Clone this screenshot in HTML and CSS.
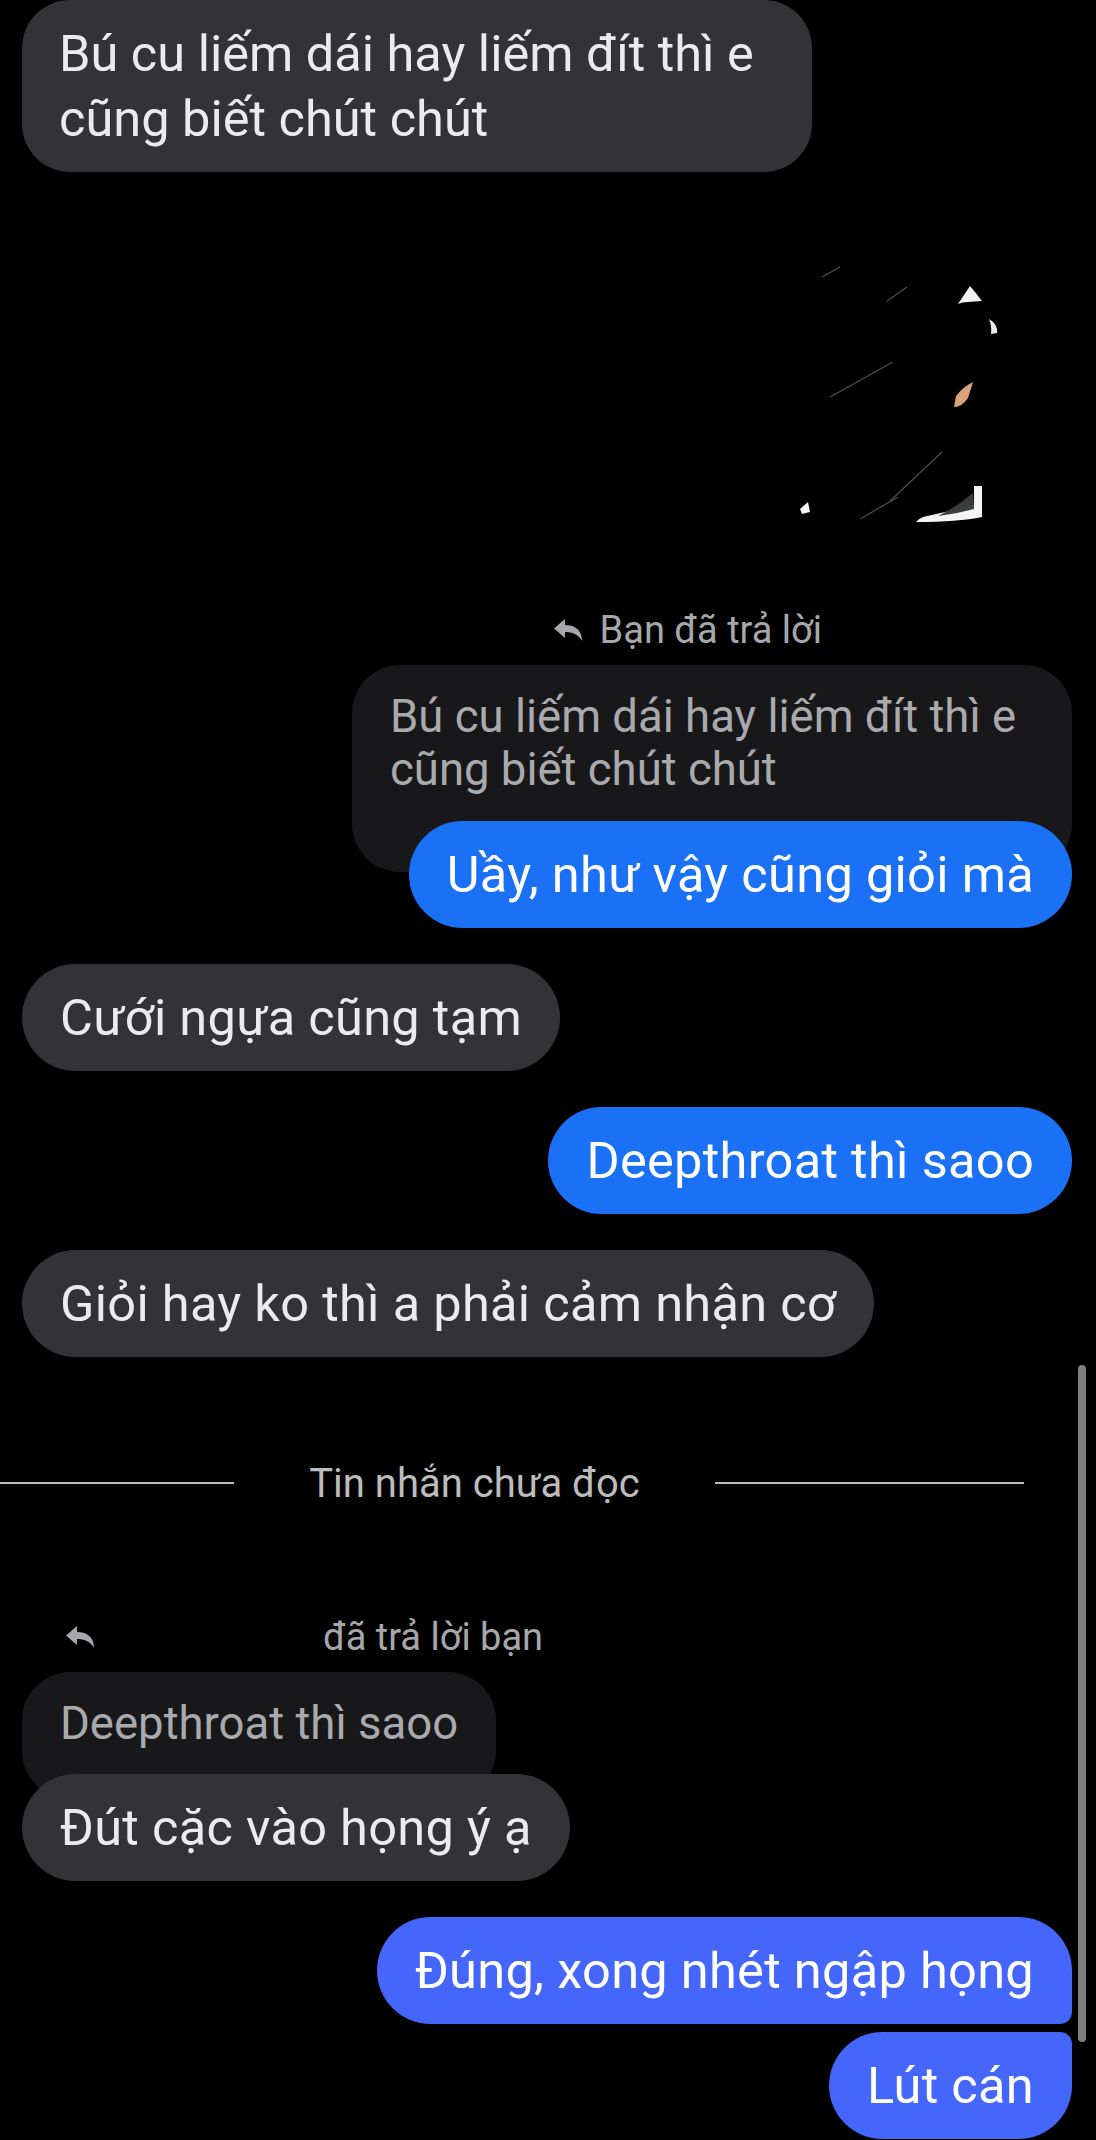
FILE: index.html
```html
<!DOCTYPE html>
<html lang="vi">
<head>
<meta charset="utf-8">
<link rel="stylesheet" href="styles.css">
</head>
<body>
<div class="chat">
  <div class="row in first">
    <div class="bubble gray two">Bú cu liếm dái hay liếm đít thì e cũng biết chút chút</div>
  </div>

  <div class="row out sticker-row">
    <svg class="sticker" width="200" height="260" viewBox="0 0 200 260">
      <g stroke="#6a6a6a" stroke-width="1.2" fill="none" opacity="0.75">
        <line x1="24" y1="12" x2="42" y2="2"/>
        <line x1="89" y1="36" x2="109" y2="22"/>
        <line x1="32" y1="132" x2="95" y2="97"/>
        <line x1="62" y1="254" x2="100" y2="232"/>
        <line x1="92" y1="236" x2="144" y2="187"/>
      </g>
      <path d="M172 21 Q178 28 184 36 L170 37 Q164 37 160 39 Q166 30 172 21 Z" fill="#f2f2f2"/>
      <path d="M191 54 Q200 59 199 68 L193 69 Q194 61 191 54 Z" fill="#ececec"/>
      <path d="M175 117 L170 133 Q164 142 156 142 L158 131 Q166 121 175 117 Z" fill="#d9a27a"/>
      <path d="M176 221 L184 221 L184 252 Q160 257 118 257 Q120 254 125 252 Q152 246 176 240 Z" fill="#f4f4f4"/>
      <path d="M175 228 L176 244 Q158 249 140 251 Q160 241 175 228 Z" fill="#3a3d3c"/>
      <path d="M2 244 L10 237 L12 247 L4 249 Z" fill="#f4f4f4"/>
    </svg>
  </div>

  <div class="row out label-row">
    <div class="reply-label">
      <svg class="reply-ico" width="31" height="24" viewBox="0 0 31 24"><path d="M12 1 L1 10.5 L12 20 L12 14 C19 14 25 16 29 23 C29 13 23 7 12 7 Z" fill="#a7a7ab"/></svg>
      <span>Bạn đã trả lời</span><span class="hidden-name"></span>
    </div>
  </div>
  <div class="row out quote-row">
    <div class="quote two">Bú cu liếm dái hay liếm đít thì e cũng biết chút chút</div>
  </div>
  <div class="row out overlap2">
    <div class="bubble blue">Uầy, như vậy cũng giỏi mà</div>
  </div>

  <div class="row in gap">
    <div class="bubble gray">Cưới ngựa cũng tạm</div>
  </div>
  <div class="row out gap">
    <div class="bubble blue">Deepthroat thì saoo</div>
  </div>
  <div class="row in gap">
    <div class="bubble gray">Giỏi hay ko thì a phải cảm nhận cơ</div>
  </div>

  <div class="divider">
    <span class="line left"></span>
    <span class="divider-text">Tin nhắn chưa đọc</span>
    <span class="line right"></span>
  </div>

  <div class="row in label-row2">
    <div class="reply-label">
      <svg class="reply-ico two" width="31" height="24" viewBox="0 0 31 24"><path d="M12 1 L1 10.5 L12 20 L12 14 C19 14 25 16 29 23 C29 13 23 7 12 7 Z" fill="#a7a7ab"/></svg>
      <span class="hidden-name2"></span><span>đã trả lời bạn</span>
    </div>
  </div>
  <div class="row in quote-row">
    <div class="quote">Deepthroat thì saoo</div>
  </div>
  <div class="row in overlap1">
    <div class="bubble gray">Đút cặc vào họng ý ạ</div>
  </div>

  <div class="row out gap">
    <div class="bubble violet top">Đúng, xong nhét ngập họng</div>
  </div>
  <div class="row out small-gap">
    <div class="bubble violet bottom">Lút cán</div>
  </div>
</div>
<div class="scrollbar"></div>
</body>
</html>
```

FILE: styles.css
```css
html, body {
  margin: 0;
  padding: 0;
  background: #000;
}
body {
  width: 1096px;
  height: 2140px;
  overflow: hidden;
  position: relative;
  font-family: "Roboto", "Noto Sans", sans-serif;
}
.chat {
  display: flex;
  flex-direction: column;
  padding: 0 24px 0 22px;
}
.row {
  display: flex;
}
.row.in { justify-content: flex-start; }
.row.out { justify-content: flex-end; }
.row.gap { margin-top: 36px; }
.row.small-gap { margin-top: 8px; }
.row.first { margin-top: 0; }

.bubble {
  box-sizing: border-box;
  font-size: 50.5px;
  line-height: 65px;
  letter-spacing: 0.3px;
  padding: 21px 38px;
  border-radius: 54px;
  color: #ebebef;
  max-width: 920px;
  position: relative;
}
.bubble.two { border-radius: 48px; padding-right: 20px; padding-left: 37px; max-width: 790px; letter-spacing: 0; }
.bubble.gray { background: #333336; }
.bubble.blue { background: #1a71f6; color: #fff; }
.bubble.violet { background: #4466fb; color: #fff; }
.bubble.top { border-bottom-right-radius: 12px; }
.bubble.bottom { border-top-right-radius: 12px; }

.sticker-row {
  height: 438px;
  padding-right: 74px;
  align-items: flex-start;
}
.sticker { margin-top: 93px; display: block; }

.reply-label {
  display: flex;
  align-items: center;
  font-size: 38px;
  line-height: 40px;
  color: #a7a7ab;
}
.reply-ico { margin-right: 16px; }
.reply-ico.two { margin-right: 17px; }
.label-row { padding-right: 35px; }
.hidden-name { display: inline-block; width: 215px; }
.hidden-name2 { display: inline-block; width: 210px; }
.label-row2 { margin-top: 114px; padding-left: 43px; }

.quote-row { margin-top: 15px; }
.quote {
  box-sizing: border-box;
  background: #18181a;
  color: #a9a9ae;
  font-size: 45.5px;
  line-height: 53px;
  padding: 25px 38px 49px;
  border-radius: 48px;
  max-width: 720px;
}
.quote.two { padding-right: 36px; padding-bottom: 76px; }
.overlap2 { margin-top: -51px; }
.overlap1 { margin-top: -25px; }

.divider {
  display: flex;
  align-items: center;
  margin-left: -22px;
  margin-top: 106px;
  height: 40px;
}
.divider .line {
  height: 2px;
  background: #bdbdbd;
}
.divider .left { width: 234px; }
.divider .right { width: 309px; }
.divider-text {
  font-size: 40px;
  color: #bcbcbf;
  width: 481px;
  text-align: center;
}

.scrollbar {
  position: absolute;
  left: 1078px;
  top: 1365px;
  width: 8px;
  height: 677px;
  border-radius: 4px;
  background: #7f7f7f;
}
```
